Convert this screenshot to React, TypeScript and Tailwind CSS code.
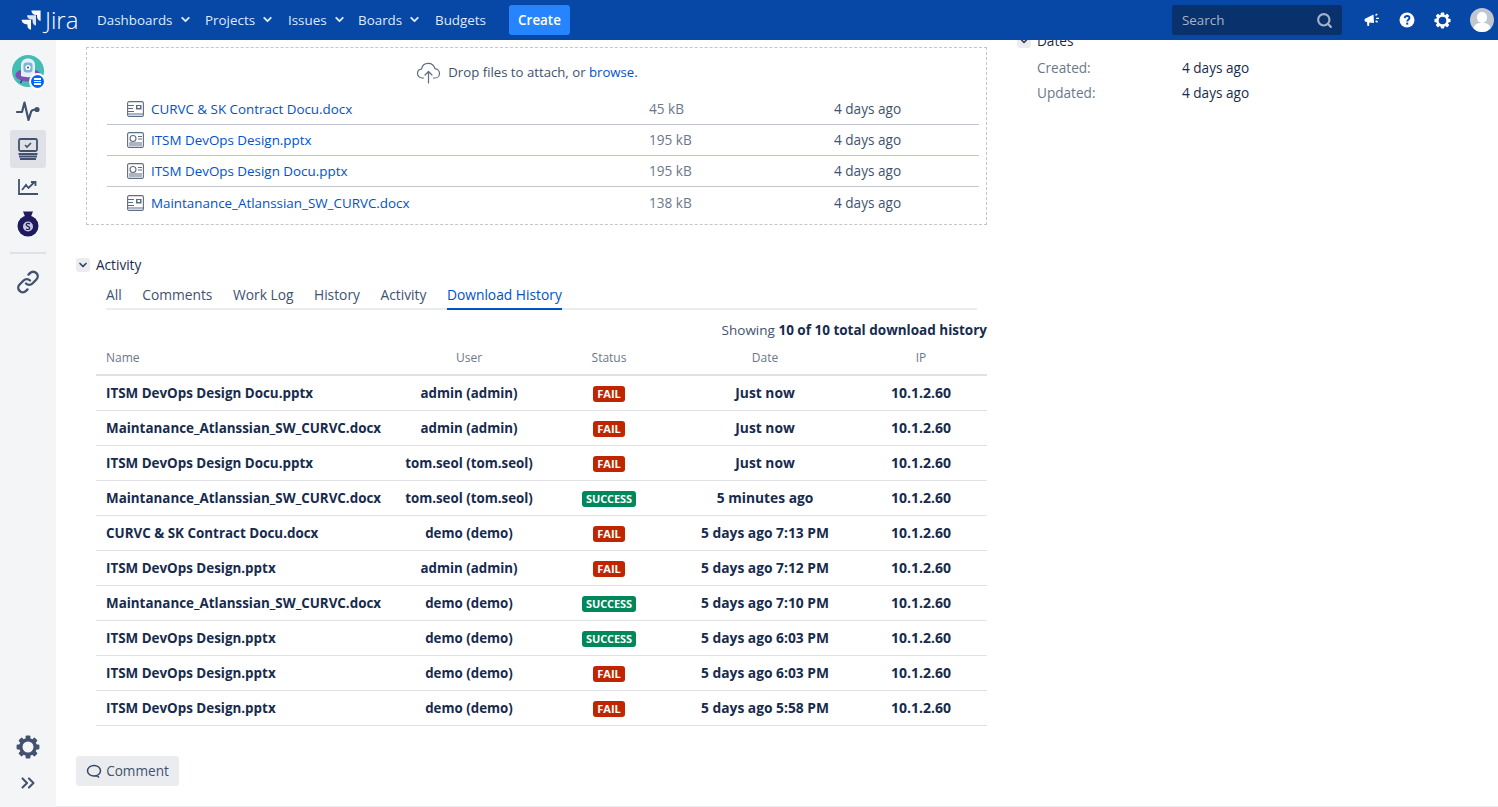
import React from "react";
import { ChevronDown, Search, ChevronsRight } from "lucide-react";

const FONT = "[font-family:'Open_Sans','Noto_Sans',sans-serif]";

const files = [
  { name: "CURVC & SK Contract Docu.docx", size: "45 kB", type: "doc" },
  { name: "ITSM DevOps Design.pptx", size: "195 kB", type: "ppt" },
  { name: "ITSM DevOps Design Docu.pptx", size: "195 kB", type: "ppt" },
  { name: "Maintanance_Atlanssian_SW_CURVC.docx", size: "138 kB", type: "doc" },
];

const history = [
  ["ITSM DevOps Design Docu.pptx", "admin (admin)", "FAIL", "Just now"],
  ["Maintanance_Atlanssian_SW_CURVC.docx", "admin (admin)", "FAIL", "Just now"],
  ["ITSM DevOps Design Docu.pptx", "tom.seol (tom.seol)", "FAIL", "Just now"],
  ["Maintanance_Atlanssian_SW_CURVC.docx", "tom.seol (tom.seol)", "SUCCESS", "5 minutes ago"],
  ["CURVC & SK Contract Docu.docx", "demo (demo)", "FAIL", "5 days ago 7:13 PM"],
  ["ITSM DevOps Design.pptx", "admin (admin)", "FAIL", "5 days ago 7:12 PM"],
  ["Maintanance_Atlanssian_SW_CURVC.docx", "demo (demo)", "SUCCESS", "5 days ago 7:10 PM"],
  ["ITSM DevOps Design.pptx", "demo (demo)", "SUCCESS", "5 days ago 6:03 PM"],
  ["ITSM DevOps Design.pptx", "demo (demo)", "FAIL", "5 days ago 6:03 PM"],
  ["ITSM DevOps Design.pptx", "demo (demo)", "FAIL", "5 days ago 5:58 PM"],
];

const tabs = ["All", "Comments", "Work Log", "History", "Activity"];

const JiraLogo = () => (
  <svg width="20" height="20" viewBox="0 0 20 20" fill="white">
    <path d="M19.6 0.5 H10.4 C10.4 3 12.4 5 15 5 H16 V6.6 C16 9 17.8 10.8 19.6 11 Z" />
    <path d="M15 5.2 H6 C6 7.6 8 9.6 10.4 9.6 H11.6 V11.2 C11.6 13.6 13.2 15.4 15 15.6 Z" opacity="0.85" />
    <path d="M10 9.8 H0.6 C0.6 12.2 2.6 14.2 5 14.2 H6.4 V15.8 C6.4 18 8 19.6 10 19.8 Z" />
  </svg>
);

const Megaphone = () => (
  <svg width="16" height="16" viewBox="0 0 16 16" fill="white">
    <path d="M0.5 7 L9.5 2.5 L10 11 L5.4 10.4 L5 14 L3.4 14 L3 10 L0.8 9.6 Z" />
    <path d="M11.5 3.4 L13.4 2 M12 6.4 H15 M11.6 9 L13.6 10" stroke="white" strokeWidth="1.4" />
  </svg>
);

const HelpIcon = () => (
  <svg width="16" height="16" viewBox="0 0 16 16">
    <circle cx="8" cy="8" r="7.5" fill="white" />
    <path d="M5.6 6.2 C5.8 4.7 6.8 4 8.1 4 C9.5 4 10.5 4.9 10.5 6.1 C10.5 7.6 8.2 7.8 8.2 9.4" fill="none" stroke="#0747a6" strokeWidth="1.8" />
    <rect x="7.2" y="10.6" width="2" height="2" fill="#0747a6" />
  </svg>
);

const GearIcon = ({ size, color, stroke }: { size: number; color: string; stroke: number }) => (
  <svg width={size} height={size} viewBox="0 0 24 24" fill="none">
    <circle cx="12" cy="12" r="7.2" stroke={color} strokeWidth={stroke} />
    {[0, 45, 90, 135, 180, 225, 270, 315].map((a) => (
      <rect key={a} x="9.6" y="0.6" width="4.8" height="4.6" rx="1" fill={color} transform={`rotate(${a} 12 12)`} />
    ))}
  </svg>
);

const ProjectAvatar = () => (
  <div className="relative w-8 h-8">
    <svg width="32" height="32" viewBox="0 0 32 32">
      <circle cx="16" cy="16" r="16" fill="#44bdb5" />
      <path d="M10 25 L8.5 28 M22 25 L23.5 28" stroke="#403294" strokeWidth="1.6" />
      <ellipse cx="16" cy="20" rx="12.5" ry="6.5" fill="#7e4fb5" />
      <path d="M9 21 V10 C9 6 12 3.5 16 3.5 C20 3.5 23 6 23 10 V21 C20 22.5 12 22.5 9 21 Z" fill="#e3f1fb" />
      <rect x="11.5" y="7.5" width="9" height="10" rx="3" fill="#7fb1da" />
      <circle cx="16" cy="12.5" r="2.6" fill="#fff" />
      <circle cx="16" cy="12.5" r="1" fill="#344563" />
    </svg>
    <div className="absolute right-[-2px] bottom-[-3px] w-[13px] h-[13px] rounded-full bg-[#0065ff] border-2 border-white box-content flex flex-col items-center justify-center gap-[1px]">
      <span className="block w-[7px] h-[1.5px] bg-white"></span>
      <span className="block w-[7px] h-[1.5px] bg-white"></span>
      <span className="block w-[7px] h-[1.5px] bg-white"></span>
    </div>
  </div>
);

const Pulse = () => (
  <svg width="26" height="24" viewBox="0 0 26 24" fill="none" stroke="#42526e" strokeWidth="2.2" strokeLinecap="round" strokeLinejoin="round">
    <path d="M2 13 H7 L9.5 3.5 L13.5 21 L16 13 C16.6 11 18 10.5 21 10.5" />
    <circle cx="22" cy="10.5" r="2.6" fill="#42526e" stroke="none" />
  </svg>
);

const BoardIcon = () => (
  <svg width="22" height="24" viewBox="0 0 22 24" fill="none" stroke="#42526e" strokeWidth="1.8">
    <rect x="2" y="2" width="18" height="12" rx="1.5" />
    <path d="M8 8 L10 10 L14 6" strokeWidth="1.6" />
    <path d="M1.5 17 H20.5 M2 19.5 H20 M3 22 H19" />
  </svg>
);

const ChartIcon = () => (
  <svg width="22" height="20" viewBox="0 0 22 20" fill="none" stroke="#42526e" strokeWidth="1.8">
    <path d="M2 2 V17 H21" />
    <path d="M5 13 L9 8 L11.5 11 L17 5.5 M14 5 H18.5 V9" />
  </svg>
);

const MoneyBag = () => (
  <svg width="22" height="26" viewBox="0 0 22 26">
    <path d="M6 0.5 H16 L14 5.5 H8 Z" fill="#1f1a5e" />
    <circle cx="11" cy="15" r="10.5" fill="#1f1a5e" />
    <circle cx="11" cy="15.5" r="5" fill="#c9c6dd" />
    <path d="M13 13 C12 12 9.2 12 9.2 13.8 C9.2 15.6 12.8 15.2 12.8 17 C12.8 18.8 10 18.8 9 17.8" fill="none" stroke="#1f1a5e" strokeWidth="1.2" />
  </svg>
);

const LinkIcon = () => (
  <svg width="24" height="24" viewBox="0 0 24 24" fill="none" stroke="#42526e" strokeWidth="2.4" strokeLinecap="round">
    <path d="M10 13.5 a4.5 4.5 0 0 0 6.4 0 l4 -4 a4.5 4.5 0 0 0 -6.4 -6.4 l-1.5 1.5" />
    <path d="M14 10.5 a4.5 4.5 0 0 0 -6.4 0 l-4 4 a4.5 4.5 0 0 0 6.4 6.4 l1.5 -1.5" />
  </svg>
);

const FileIcon = ({ type }: { type: string }) => (
  <svg width="17" height="16" viewBox="0 0 17 16" fill="none" stroke="#5e6c84" strokeWidth="1.1" className="shrink-0">
    <rect x="0.6" y="0.6" width="15.8" height="14.8" rx="1.5" />
    {type === "doc" ? (
      <>
        <path d="M1 4.5 H7 M1 7.5 H6 M1 10.5 H7 M1 13 H16" />
        <rect x="9" y="4" width="5.5" height="4.5" fill="#5e6c84" stroke="none" />
        <rect x="10.5" y="5" width="2.5" height="2" fill="#fff" stroke="none" />
      </>
    ) : (
      <>
        <circle cx="6" cy="6.5" r="3" />
        <path d="M11 4.5 H15 M11 7 H15 M2 11 H15 M2 13 H15" />
      </>
    )}
  </svg>
);

const Cloud = () => (
  <svg width="25" height="22" viewBox="0 0 24 22" fill="none" stroke="#5e6c84" strokeWidth="1.2" strokeLinecap="round" strokeLinejoin="round">
    <path d="M7 16 H5.5 C3 16 1 14 1 11.5 C1 9.2 2.8 7.4 5 7.2 C5.6 3.8 8.4 1.4 11.8 1.4 C15 1.4 17.6 3.6 18.4 6.6 C21 6.8 23 9 23 11.5 C23 14 21 16 18.5 16 H17" />
    <path d="M12 21 V9.5 M8.5 13 L12 9.5 L15.5 13" />
  </svg>
);

const SectionToggle = () => (
  <span className="w-3.5 h-3.5 rounded-[3px] bg-[#ebecf0] flex items-center justify-center shrink-0">
    <ChevronDown size={12} strokeWidth={3.5} color="#344563" />
  </span>
);

const Status = ({ value }: { value: string }) => (
  <span
    className={
      "inline-flex items-center h-4 mt-[1px] rounded-[3px] text-[11px] font-bold text-white leading-none " +
      (value === "FAIL" ? "bg-[#bf2600] px-[4px]" : "bg-[#00875a] px-[4px] tracking-[-0.1px]")
    }
  >
    {value}
  </span>
);

const NavItem = ({ label, width }: { label: string; width: string }) => (
  <div className={"flex items-center gap-[6px] " + width}>
    <span>{label}</span>
    <ChevronDown size={13} strokeWidth={3.5} />
  </div>
);

export default function App() {
  return (
    <div className={"w-[1498px] h-[807px] overflow-hidden flex flex-col bg-white text-[13.6px] text-[#172b4d] " + FONT}>
      <header className="h-10 shrink-0 bg-[#0747a6] flex items-center text-[#deebff] text-[13.4px] relative z-10">
        <div className="flex items-center gap-[4px] pl-[21px] w-[97px] text-white">
          <JiraLogo />
          <span className="text-[24px] leading-none font-light">Jira</span>
        </div>
        <NavItem label="Dashboards" width="w-[108px]" />
        <NavItem label="Projects" width="w-[83px]" />
        <NavItem label="Issues" width="w-[70px]" />
        <NavItem label="Boards" width="w-[77px]" />
        <span className="w-[74px]">Budgets</span>
        <button className="h-[30px] w-[61px] rounded-[3px] bg-[#2684ff] text-white font-semibold">Create</button>
        <div className="ml-auto flex items-center">
          <div className="w-[170px] h-[30px] rounded-[3px] bg-[#09326c] flex items-center justify-between pl-[10px] pr-[9px] text-[#a5b3c9]">
            <span>Search</span>
            <Search size={17} strokeWidth={3} />
          </div>
          <div className="flex items-center gap-[19px] ml-[22px] text-white">
            <Megaphone />
            <HelpIcon />
            <GearIcon size={17} color="white" stroke={3.6} />
          </div>
          <div className="relative w-6 h-6 rounded-full bg-[#c1c7d0] overflow-hidden ml-[19px] mr-[4px]">
            <span className="absolute left-[7px] top-[4px] w-[10px] h-[11px] rounded-full bg-white"></span>
            <span className="absolute left-[3px] top-[15px] w-[18px] h-[14px] rounded-full bg-white"></span>
          </div>
        </div>
      </header>

      <div className="flex-1 flex min-h-0">
        <aside className="w-14 shrink-0 bg-[#f4f5f7] flex flex-col items-center">
          <div className="mt-[15px] mb-[6px]">
            <ProjectAvatar />
          </div>
          <div className="h-9 flex items-center justify-center"><Pulse /></div>
          <div className="h-[38px] w-9 mt-[1px] rounded-[3px] bg-[#dfe1e6] flex items-center justify-center"><BoardIcon /></div>
          <div className="h-[38px] flex items-center justify-center"><ChartIcon /></div>
          <div className="h-9 flex items-center justify-center"><MoneyBag /></div>
          <div className="w-9 h-[2px] bg-[#dfe1e6] mt-[10px] mb-[10px]"></div>
          <div className="h-9 flex items-center justify-center"><LinkIcon /></div>
          <div className="mt-auto flex flex-col items-center mb-[13px] text-[#42526e] gap-[13px]">
            <GearIcon size={24} color="#42526e" stroke={3.4} />
            <ChevronsRight size={22} strokeWidth={2.2} />
          </div>
        </aside>

        <main className="flex-1 min-w-0 flex overflow-hidden border-b border-[#ebecf0]">
          <div className="w-[931px] shrink-0 ml-[20px]">
            <div className="ml-[10px] mt-[7px] h-[178px] w-[901px] border border-dashed border-[#c1c7d0] pl-[20px] pr-[7px]">
              <div className="h-[46px] pt-[4px] flex items-center justify-center gap-[7px] text-[#42526e] text-[13.2px] pr-[32px]">
                <Cloud />
                <span>Drop files to attach, or <span className="text-[#0052cc]">browse.</span></span>
              </div>
              {files.map((f, i) => (
                <div
                  key={i}
                  className={"h-[31px] pt-[1px] flex items-center " + (i < files.length - 1 ? "border-b border-[#c1c7d0]" : "")}
                >
                  <div className="w-[542px] flex items-center gap-[7px] pl-[20px] text-[#0052cc] text-[13.4px]">
                    <FileIcon type={f.type} />
                    <span>{f.name}</span>
                  </div>
                  <span className="w-[185px] text-[#6b778c]">{f.size}</span>
                  <span className="text-[#42526e]">4 days ago</span>
                </div>
              ))}
            </div>

            <div className="mt-[30px] flex items-center gap-[6px] h-5">
              <SectionToggle />
              <span className="text-[#172b4d]">Activity</span>
            </div>

            <div className="ml-[30px] w-[871px] mt-[10px] h-[25px] border-b-2 border-[#ebecf0] flex gap-[20.5px] text-[#42526e] font-medium text-[13.8px]">
              {tabs.map((t) => (
                <span key={t} className="h-[25px] leading-[20px]">{t}</span>
              ))}
              <span className="h-[25px] leading-[20px] text-[#0052cc] border-b-2 border-[#0052cc]">Download History</span>
            </div>

            <div className="w-[911px] h-[30px] flex items-center justify-end text-[#42526e] mt-[5px] text-[13.5px]">
              <span>Showing <b className="text-[#172b4d]">10 of 10 total download history</b></span>
            </div>

            <div className="w-[891px] ml-[20px]">
              <div className="grid grid-cols-[294px_158px_122px_190px_122px_5px] h-[31px] pb-[4px] items-center border-b-2 border-[#dfe1e6] text-[12px] font-medium text-[#6b778c] text-center">
                <span className="text-left pl-[10px]">Name</span>
                <span>User</span>
                <span>Status</span>
                <span>Date</span>
                <span>IP</span>
              </div>
              {history.map((row, i) => (
                <div
                  key={i}
                  className="grid grid-cols-[294px_158px_122px_190px_122px_5px] h-[35px] items-center border-b border-[#dfe1e6] font-bold text-center"
                >
                  <span className="text-left pl-[10px] pt-[1px] whitespace-nowrap text-[13.4px]">{row[0]}</span>
                  <span className="text-[13.3px] pt-[1px]">{row[1]}</span>
                  <span className="flex justify-center"><Status value={row[2]} /></span>
                  <span className="text-[13.8px]">{row[3]}</span>
                  <span className="text-[14px] pb-[1px]">10.1.2.60</span>
                </div>
              ))}
            </div>

            <button className="mt-[30px] h-[30px] w-[103px] rounded-[3px] bg-[#ebecf0] text-[#42526e] flex items-center justify-center gap-[4px]">
              <svg width="16" height="15" viewBox="0 0 16 15" fill="none" stroke="#344563" strokeWidth="1.5">
                <path d="M8 1.5 C11.6 1.5 14.5 3.8 14.5 6.8 C14.5 9.8 11.6 12 8 12 C4.4 12 1.5 9.8 1.5 6.8 C1.5 3.8 4.4 1.5 8 1.5 Z M11 11.5 L13 13.5" />
              </svg>
              Comment
            </button>
          </div>

          <div className="ml-[10px] flex-1 -mt-[8px]">
            <div className="flex items-center gap-[6px] h-[18px]">
              <SectionToggle />
              <span>Dates</span>
            </div>
            <div className="mt-[8px] ml-[20px] flex flex-col gap-[5px]">
              <div className="flex h-5 items-center">
                <span className="w-[145px] text-[#6b778c]">Created:</span>
                <span>4 days ago</span>
              </div>
              <div className="flex h-5 items-center">
                <span className="w-[145px] text-[#6b778c]">Updated:</span>
                <span>4 days ago</span>
              </div>
            </div>
          </div>
        </main>
      </div>
    </div>
  );
}
